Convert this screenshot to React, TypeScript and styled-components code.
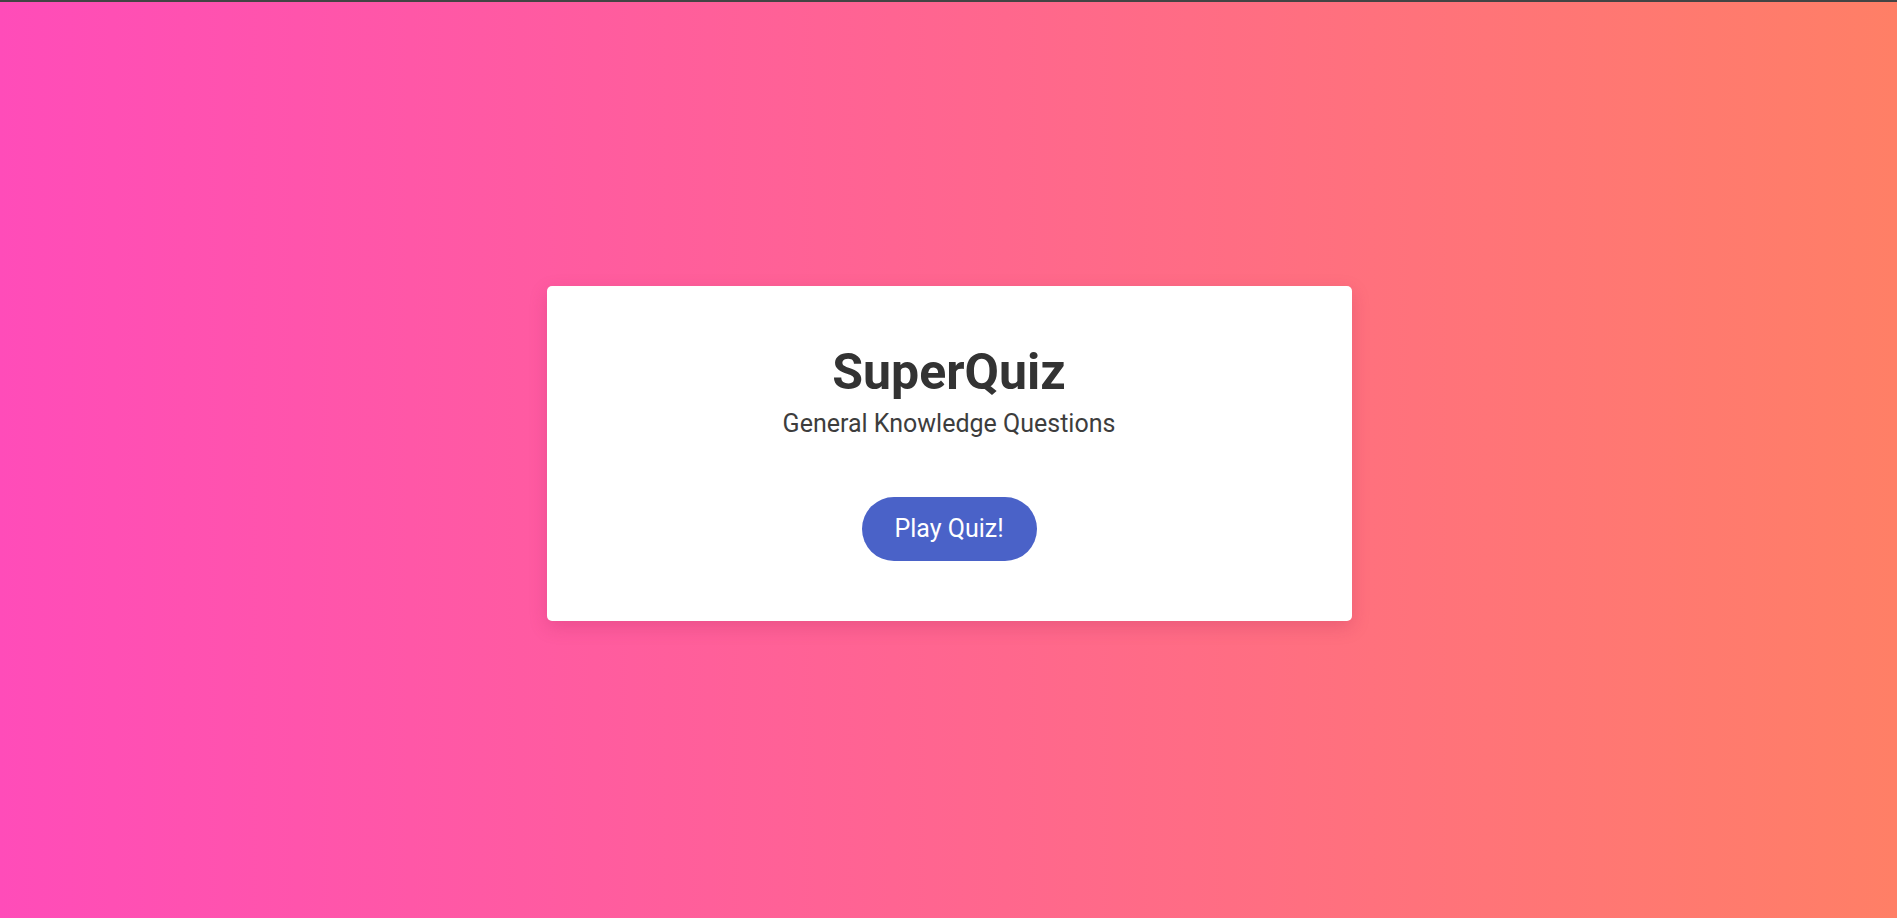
import React from "react";
import styled, { createGlobalStyle } from "styled-components";

const GlobalStyle = createGlobalStyle`
  html, body {
    margin: 0;
    padding: 0;
    height: 100%;
  }
  body {
    font-family: Roboto, "Liberation Sans", Arial, sans-serif;
    background: #444;
  }
  #root {
    height: 100%;
  }
`;

const Page = styled.div`
  box-sizing: border-box;
  height: 918px;
  border-top: 2px solid #444;
  background: linear-gradient(to right, #ff4cb9, #ff7f66);
  display: flex;
  align-items: center;
  justify-content: center;
  padding-bottom: 14px;
  padding-left: 1px;
`;

const Card = styled.div`
  box-sizing: border-box;
  width: 805px;
  height: 335px;
  background: #fff;
  border-radius: 5px;
  box-shadow: 0 6px 18px rgba(160, 30, 80, 0.22);
  display: flex;
  flex-direction: column;
  align-items: center;
  padding-top: 56px;
`;

const Title = styled.h1`
  margin: 0;
  font-size: 50px;
  line-height: 60px;
  font-weight: 700;
  color: #333;
`;

const Subtitle = styled.p`
  margin: 7px 0 0;
  font-size: 25px;
  line-height: 30px;
  font-weight: 400;
  color: #3d3d3d;
`;

const PlayButton = styled.button`
  margin-top: 58px;
  width: 175px;
  height: 64px;
  border: none;
  border-radius: 32px;
  background: #4a62c8;
  color: #fff;
  font-family: Roboto, "Liberation Sans", Arial, sans-serif;
  font-size: 25px;
  cursor: pointer;
`;

export default function App() {
  return (
    <>
      <GlobalStyle />
      <Page>
        <Card>
          <Title>SuperQuiz</Title>
          <Subtitle>General Knowledge Questions</Subtitle>
          <PlayButton>Play Quiz!</PlayButton>
        </Card>
      </Page>
    </>
  );
}
